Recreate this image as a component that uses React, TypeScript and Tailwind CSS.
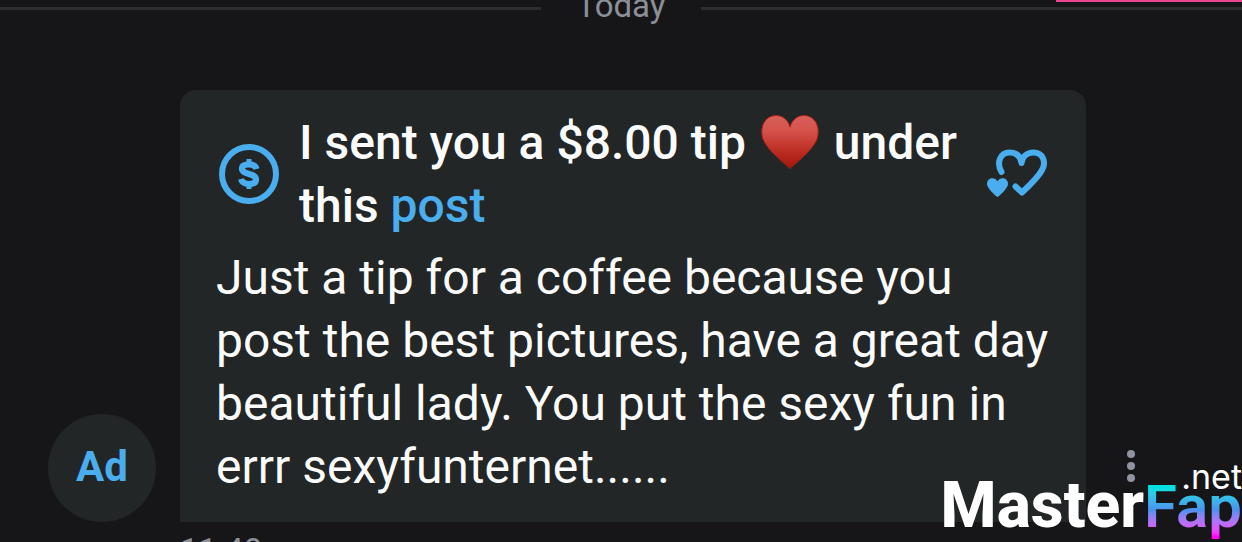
import React from 'react';

function HeartEmoji() {
  return (
    <svg viewBox="0 0 58 56" role="img" aria-label="heart" className="inline-block w-[58px] h-14 mx-[3px] align-[-11px]">
      <defs>
        <linearGradient id="heartFill" x1="0" y1="0" x2="0" y2="1">
          <stop offset="0" stopColor="#d9605a" />
          <stop offset="0.3" stopColor="#d4514b" />
          <stop offset="0.65" stopColor="#bd2f24" />
          <stop offset="1" stopColor="#a51408" />
        </linearGradient>
      </defs>
      <path
        d="M29 54.5C26 51 6 37 1.5 24C-1.500 11 5 1.500 15 1.500C22 1.500 27 6 29 13C31 6 36 1.500 43 1.500C53 1.500 59.500 11 56.500 24C52 37 32 51 29 54.500Z"
        fill="url(#heartFill)"
        stroke="#a52018"
        strokeWidth="1"
      />
    </svg>
  );
}

function TipIcon() {
  return (
    <svg viewBox="0 0 60 60" aria-hidden="true" className="size-[60px] shrink-0">
      <circle cx="30" cy="30" r="27" fill="none" stroke="#4aaeee" strokeWidth="6" />
      <path
        d="M37.500 25C36.500 21.500 34 20.300 30 20.300C25.500 20.300 23 22 23 24.500C23 31.500 37 28.500 37 35.500C37 38.500 34.500 40 30 40C25.500 40 23 38.500 22 35"
        fill="none"
        stroke="#4aaeee"
        strokeWidth="6.200"
      />
      <path d="M27.500 15h5v5h-5zM27.500 40h5v5h-5z" fill="#4aaeee" />
    </svg>
  );
}

function HeartsIcon() {
  return (
    <svg viewBox="0 0 60 50" aria-hidden="true" className="w-[60px] h-[50px]">
      <path
        d="M14.500 23C9 13.500 13.500 3.500 22.500 3.500C29.500 3.500 33.500 7.500 34.500 14C35.500 7.500 40 3.500 46.500 3.500C56 3.500 59.500 13 55 21C51 28.500 43 36 35 43.500L28.500 37.500"
        fill="none"
        stroke="#4aaeee"
        strokeWidth="6"
        strokeLinecap="round"
        strokeLinejoin="round"
      />
      <path d="M10.500 48C8 46.500 0 39 0 35C0 28.500 8 27.500 10.500 32.500C13 27.500 21 28.500 21 35C21 39 13 46.500 10.500 48Z" fill="#4aaeee" />
    </svg>
  );
}

export default function App() {
  return (
    <div className="relative h-screen overflow-hidden bg-[#161618] font-[Roboto,sans-serif]">
      <div className="absolute top-0 right-0 w-[186px] h-[2px] bg-[#ec4592]" />

      <div className="flex items-center -mt-[15px] text-[33px] leading-[42px] text-[#8a8f98]">
        <div className="flex-1 h-[3px] mt-1 bg-[#2d2e2f]" />
        <h2 className="w-40 text-center">Today</h2>
        <div className="flex-1 h-[3px] mt-1 bg-[#2d2e2f]" />
      </div>

      <main className="flex items-end gap-5 pl-12 pr-[86px] pt-[63px]">
        <div className="mr-1 flex items-center justify-center size-[108px] shrink-0 rounded-full bg-[#232626] pb-1 text-[#4aaeee] text-[42px] font-bold">
          Ad
        </div>
        <article className="flex-1 rounded-t-2xl bg-[#232626] px-9 pt-[21px] pb-6 text-5xl leading-[63px] text-[#fbfbfb]">
          <div className="flex items-center gap-5 px-[3px] pb-[9px]">
            <TipIcon />
            <h3 className="flex-1 font-medium">
              I sent you a $8.00 tip <HeartEmoji /> under this{' '}
              <a href="#post" className="text-[#4aaeee]">post</a>
            </h3>
            <button type="button" aria-label="Like" className="shrink-0 flex">
              <HeartsIcon />
            </button>
          </div>
          <p>
            Just a tip for a coffee because you post the best pictures, have a great day beautiful lady. You put the sexy fun in
            errr sexyfunternet......
          </p>
        </article>
        <button type="button" aria-label="More options" className="mb-10 flex w-[50px] shrink-0 flex-col items-center gap-1 text-[#9093a0]">
          <span className="size-2 rounded-full bg-current" />
          <span className="size-2 rounded-full bg-current" />
          <span className="size-2 rounded-full bg-current" />
        </button>
      </main>
      <p className="pl-[180px] pt-2 text-[33px] leading-[42px] text-[#8a8f98]">11:48 am</p>

      <div className="absolute right-0 bottom-[3px] flex items-baseline leading-[64px] text-white">
        <span className="text-[64px] font-extrabold">Master</span>
        <span className="bg-linear-to-b from-[#00e0e0] from-20% via-[#4c90f0] via-55% to-[#ff00ff] to-95% bg-clip-text text-[60px] font-semibold text-transparent">
          Fap
        </span>
        <span className="absolute right-0 bottom-11 font-[Inter,sans-serif] text-[34px] leading-9">.net</span>
      </div>
    </div>
  );
}
